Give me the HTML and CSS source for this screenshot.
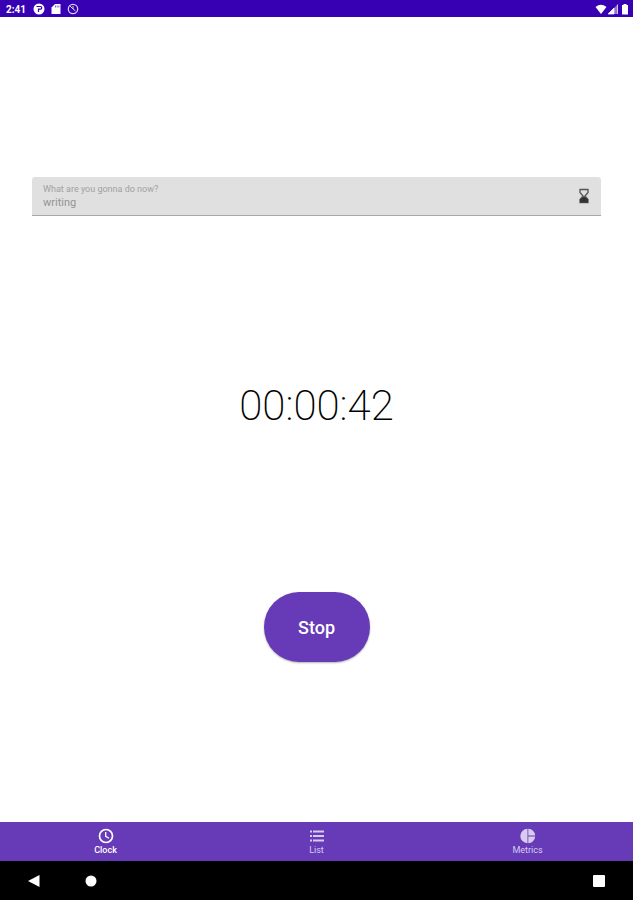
FILE: index.html
```html
<!DOCTYPE html>
<html lang="en">
<head>
<meta charset="UTF-8" />
<meta name="viewport" content="width=device-width, initial-scale=1" />
<title>Clock</title>
<link rel="stylesheet" href="styles.css">
</head>
<body>

<header class="status-bar">
    <span class="status-time">2:41</span>
    <svg class="status-icon" viewBox="0 0 12 12">
        <circle cx="6" cy="6" r="5.500" fill="#fff"/>
        <path d="M3.500 3.500h4a1.300 1.300 0 0 1 0 2.600H5.500v3" fill="none" stroke="#3700b3" stroke-width="1.200"/>
    </svg>
    <svg class="status-icon" viewBox="0 0 12 12">
        <path d="M5 1h5.500v10h-9V4.500z" fill="#fff"/>
        <path d="M5.500 2.500v2M7.200 2.500v2M8.900 2.500v2" stroke="#3700b3" stroke-width=".6"/>
    </svg>
    <svg class="status-icon" viewBox="0 0 12 12">
        <circle cx="6" cy="6" r="4.700" fill="none" stroke="#d8ccf2" stroke-width="1.300"/>
        <path d="M3 3l3 3 2.500 2M6 3v3" fill="none" stroke="#d8ccf2"/>
    </svg>
    <div class="status-right">
        <svg class="status-icon" viewBox="0 0 12 12">
            <path d="M.5 4Q6-.5 11.500 4L6 11z" fill="#fff"/>
        </svg>
        <svg class="status-icon" viewBox="0 0 12 12">
            <path d="M10.500 1.500v9.500H1z" fill="#fff" fill-opacity=".45"/>
            <path d="M7 5v6H1zM10.500 1.500v9.500" fill="#fff" stroke="#fff" stroke-width=".7"/>
        </svg>
        <svg class="status-icon" viewBox="0 0 12 12">
            <path d="M4.500 1h3v1H9v9.500H3V2h1.500z" fill="#fff"/>
        </svg>
    </div>
</header>

<main class="clock">
    <div class="field">
        <div class="field-text">
            <label for="task">What are you gonna do now?</label>
            <input type="text" id="task" name="task" value="writing" disabled>
        </div>
        <svg class="hourglass" viewBox="0 0 12 16">
            <path d="M2 1.500h8v3L7 8l3 3.500v3H2v-3L5 8 2 4.500z" fill="none" stroke="#555" stroke-width="1.300"/>
            <path d="M6 8l4 3.500v3H2v-3z" fill="#333"/>
        </svg>
    </div>

    <div class="timer" role="timer">00:00:42</div>

    <button type="button" class="stop-btn">Stop</button>
</main>

<nav class="tabs">
    <a href="#clock" class="tab active">
        <svg viewBox="0 0 16 16">
            <circle cx="8" cy="8" r="6.500" fill="none" stroke="currentColor" stroke-width="1.700"/>
            <path d="M7.700 4v4.300l3.300 2" fill="none" stroke="currentColor" stroke-width="1.300"/>
        </svg>
        Clock
    </a>
    <a href="#list" class="tab">
        <svg viewBox="0 0 16 16">
            <path d="M1 3.500h2M1 8h2M1 12.500h2M4 3.500H15M4 8H15M4 12.500H15" fill="none" stroke="currentColor" stroke-width="1.800"/>
        </svg>
        List
    </a>
    <a href="#metrics" class="tab">
        <svg viewBox="0 0 16 16">
            <path d="M7.500.8v14.400a7.200 7.200 0 0 1 0-14.400zM8.300.8a7.200 7.200 0 0 1 6.900 6.700H8.300zM8.300 8.500h6.900a7.200 7.200 0 0 1-6.900 6.700z" fill="currentColor"/>
        </svg>
        Metrics
    </a>
</nav>

<footer class="system-bar">
    <button type="button" aria-label="Back">
        <svg viewBox="0 0 12 12"><path d="M11.500 0v12L0 6z" fill="#fff"/></svg>
    </button>
    <button type="button" aria-label="Home">
        <svg viewBox="0 0 12 12"><circle cx="6" cy="6" r="5.500" fill="#fff"/></svg>
    </button>
    <button type="button" class="recents" aria-label="Recent apps">
        <svg viewBox="0 0 12 12"><rect width="12" height="12" rx="1" fill="#fff"/></svg>
    </button>
</footer>

</body>
</html>
```
FILE: styles.css
```css
* {
    box-sizing: border-box;
}

body {
    margin: 0;
    min-height: 100vh;
    display: flex;
    flex-direction: column;
    font-family: Roboto, "Liberation Sans", sans-serif;
    background-color: #ffffff;
}

svg {
    display: block;
}

button {
    border: none;
    padding: 0;
    font-family: inherit;
    cursor: pointer;
}

/* Status bar */
.status-bar {
    display: flex;
    align-items: center;
    gap: 5px;
    height: 17px;
    padding: 1px 2px 0 6px;
    background-color: #3700b3;
    color: #ffffff;
}

.status-time {
    margin-right: 2px;
    font-size: 10px;
    font-weight: 700;
}

.status-icon {
    width: 12px;
    height: 12px;
}

.status-right {
    display: flex;
    margin-left: auto;
}

/* Clock screen */
.clock {
    flex: 1;
    display: flex;
    flex-direction: column;
    align-items: center;
    justify-content: space-evenly;
    padding: 0 32px;
}

.field {
    display: flex;
    align-items: center;
    width: 100%;
    padding: 6px 11px;
    background-color: #e0e0e0;
    border-bottom: 1px solid #a8a8a8;
    border-radius: 3px 3px 0 0;
}

.field-text {
    flex: 1;
}

.field label {
    display: block;
    font-size: 9px;
    line-height: 12px;
    color: #a0a0a0;
}

.field input {
    display: block;
    width: 100%;
    height: 14px;
    padding: 0;
    border: none;
    background: none;
    font-family: inherit;
    font-size: 11px;
    color: #949494;
}

.hourglass {
    width: 12px;
    height: 16px;
}

.timer {
    padding-top: 4px;
    font-size: 42px;
    font-weight: 200;
    line-height: 52px;
    color: #000000;
}

.stop-btn {
    width: 106px;
    height: 70px;
    border-radius: 35px;
    background-color: #673ab7;
    box-shadow: 0 1px 2px rgba(0, 0, 0, 0.3);
    color: #ffffff;
    font-size: 18px;
    font-weight: 500;
}

/* Bottom tabs */
.tabs {
    display: flex;
    background-color: #673ab7;
}

.tab {
    flex: 1;
    display: flex;
    flex-direction: column;
    align-items: center;
    gap: 1px;
    padding: 6px 0;
    font-size: 9px;
    line-height: 10px;
    text-decoration: none;
    color: #d8ccee;
}

.tab.active {
    color: #ffffff;
    font-weight: 500;
}

.tab svg {
    width: 16px;
    height: 16px;
}

/* Android buttons */
.system-bar {
    display: flex;
    align-items: center;
    gap: 45px;
    height: 39px;
    padding: 0 28px;
    background-color: #000000;
}

.system-bar button {
    background: none;
}

.system-bar svg {
    width: 12px;
    height: 12px;
}

.system-bar .recents {
    margin-left: auto;
}
```
